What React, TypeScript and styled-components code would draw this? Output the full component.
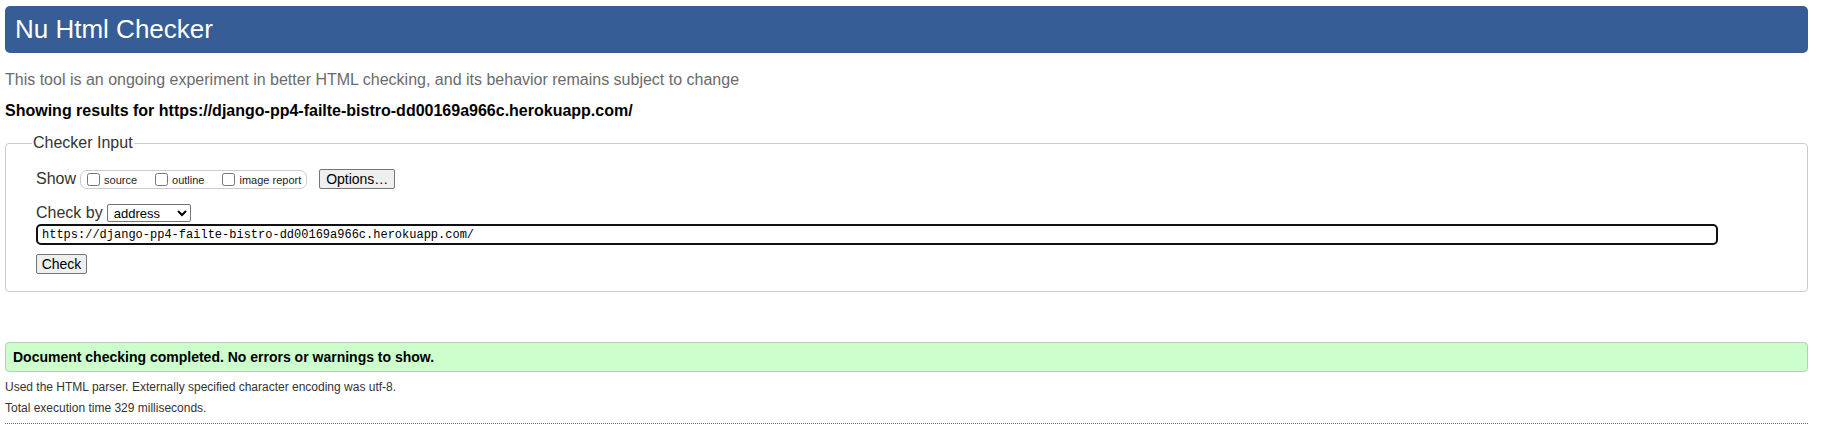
import React from "react";
import styled, { createGlobalStyle } from "styled-components";

const GlobalStyle = createGlobalStyle`
  body {
    margin: 0;
    background: #ffffff;
    font-family: "Liberation Sans", Arial, sans-serif;
    color: #000000;
  }
`

const Page = styled.div`
  padding: 6px 14px 8px 5px;
`

const Header = styled.h1`
  margin: 0;
  height: 47px;
  padding-left: 10px;
  background-color: #365d95;
  color: #ffffff;
  border-radius: 5px;
  font-size: 26px;
  font-weight: normal;
  line-height: 47px;
`

const Tagline = styled.p`
  margin: 17px 0 0;
  font-size: 16px;
  line-height: 20px;
  color: #6b6b6b;
`

const Results = styled.p`
  margin: 11px 0 0;
  font-size: 16px;
  font-weight: bold;
  line-height: 20px;
`

const Fieldset = styled.fieldset`
  margin: 13px 0 0;
  padding: 0 0 17px 30px;
  border: 1px solid #cccccc;
  border-radius: 4px;
  min-width: 0;
`

const Legend = styled.legend`
  margin-left: -4px;
  padding: 0 1px;
  font-size: 16px;
  color: #333333;
`

const Row = styled.div<{ $top: number }>`
  display: flex;
  align-items: center;
  height: 20px;
  margin-top: ${(p) => p.$top}px;
  font-size: 16px;
  color: #333333;
`

const Label = styled.span`
  margin-right: 4px;
`

const Group = styled.div`
  display: flex;
  align-items: center;
  gap: 18px;
  height: 17px;
  padding: 0 5px 0 6px;
  border: 1px solid #cccccc;
  border-radius: 7px;
  margin-right: 12px;
`

const Option = styled.label`
  display: flex;
  align-items: center;
  gap: 4px;
  padding-top: 1px;
  font-size: 11px;
  color: #222222;
`

const Box = styled.input`
  width: 13px;
  height: 13px;
  margin: 0;
`

const Button = styled.button<{ $w: number }>`
  width: ${(p) => p.$w}px;
  height: 20px;
  padding: 0;
  background: #efefef;
  border: 1px solid #767676;
  border-radius: 2px;
  font-family: "Liberation Sans", Arial, sans-serif;
  font-size: 14px;
  color: #000000;
`

const Select = styled.select`
  width: 84px;
  height: 18px;
  padding: 0 0 0 2px;
  border: 1px solid #767676;
  border-radius: 2px;
  background: #ffffff;
  font-family: "Liberation Sans", Arial, sans-serif;
  font-size: 13px;
  color: #000000;
`

const UrlInput = styled.input`
  display: block;
  box-sizing: border-box;
  width: 95%;
  height: 21px;
  margin-top: 1px;
  padding: 0 4px;
  border: 2px solid #101010;
  border-radius: 5px;
  outline: none;
  font-family: "Liberation Mono", "DejaVu Sans Mono", monospace;
  font-size: 12px;
  color: #000000;
`

const CheckRow = styled.div`
  margin-top: 9px;
`

const Success = styled.div`
  margin-top: 50px;
  height: 28px;
  padding-left: 7px;
  background-color: #ccffcc;
  border: 1px solid #b9cbb9;
  border-radius: 4px;
  font-size: 14px;
  font-weight: bold;
  line-height: 28px;
`

const Details = styled.div`
  margin-top: 5px;
  padding-bottom: 4px;
  border-bottom: 1px dotted #666666;
`

const Note = styled.p`
  margin: 0;
  font-size: 12px;
  line-height: 21px;
  color: #333333;
`

const url = "https://django-pp4-failte-bistro-dd00169a966c.herokuapp.com/";

const App = () => {
  return (
    <Page>
      <GlobalStyle />
      <Header>Nu Html Checker</Header>
      <Tagline>
        This tool is an ongoing experiment in better HTML checking, and its behavior remains subject to change
      </Tagline>
      <Results>Showing results for {url}</Results>
      <Fieldset>
        <Legend>Checker Input</Legend>
        <Row $top={17}>
          <Label>Show</Label>
          <Group>
            <Option><Box type="checkbox" />source</Option>
            <Option><Box type="checkbox" />outline</Option>
            <Option><Box type="checkbox" />image report</Option>
          </Group>
          <Button $w={76}>Options…</Button>
        </Row>
        <Row $top={14}>
          <Label>Check by</Label>
          <Select defaultValue="address">
            <option value="address">address</option>
            <option value="file">file upload</option>
            <option value="text">text input</option>
          </Select>
        </Row>
        <UrlInput type="url" defaultValue={url} />
        <CheckRow>
          <Button $w={51}>Check</Button>
        </CheckRow>
      </Fieldset>
      <Success>Document checking completed. No errors or warnings to show.</Success>
      <Details>
        <Note>Used the HTML parser. Externally specified character encoding was utf-8.</Note>
        <Note>Total execution time 329 milliseconds.</Note>
      </Details>
    </Page>
  )
}

export default App;
